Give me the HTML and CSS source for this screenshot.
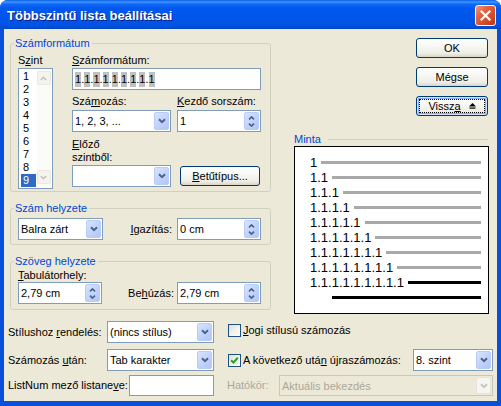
FILE: index.html
```html
<!DOCTYPE html>
<html>
<head>
<meta charset="utf-8">
<title>Többszintű lista beállításai</title>
<link rel="stylesheet" href="styles.css">
</head>
<body>
<div class="window">
  <div class="titlebar">
    <span class="title">Többszintű lista beállításai</span>
    <span class="close"><svg width="13" height="13" viewBox="0 0 13 13"><path d="M2.5 2.5 L10.5 10.5 M10.5 2.5 L2.5 10.5" stroke="#fff" stroke-width="2.2" stroke-linecap="square"/></svg></span>
  </div>
  <div class="client">
    <div class="main">
      <div class="leftcol">
        <div class="group g1">
          <div class="gtitle">Számformátum</div>
          <div class="g1body">
            <div class="szint">
              <div class="lbl">S<u>z</u>int</div>
              <div class="listbox">
                <div class="items">
                  <div class="item">1</div>
                  <div class="item">2</div>
                  <div class="item">3</div>
                  <div class="item">4</div>
                  <div class="item">5</div>
                  <div class="item">6</div>
                  <div class="item">7</div>
                  <div class="item">8</div>
                  <div class="item sel">9</div>
                </div>
                <div class="vscroll">
                  <span class="sbtn"><svg width="7" height="5" viewBox="0 0 7 5"><path d="M0.8 4 L3.5 1.3 L6.2 4" fill="none" stroke="#C3C1B7" stroke-width="1.6"/></svg></span>
                  <span class="sbtn"><svg width="7" height="5" viewBox="0 0 7 5"><path d="M0.8 1 L3.5 3.7 L6.2 1" fill="none" stroke="#C3C1B7" stroke-width="1.6"/></svg></span>
                </div>
              </div>
            </div>
            <div class="fmt">
              <div class="lbl"><u>S</u>zámformátum:</div>
              <div class="textbox fmtbox"><span class="fc">1</span>.<span class="fc">1</span>.<span class="fc">1</span>.<span class="fc">1</span>.<span class="fc">1</span>.<span class="fc">1</span>.<span class="fc">1</span>.<span class="fc">1</span>.<span class="fc">1</span></div>
              <div class="row2">
                <div class="colnum">
                  <div class="lbl">Szá<u>m</u>ozás:</div>
                  <div class="combo w99 mt2"><span class="val">1, 2, 3, ...</span><span class="dd"><svg width="8" height="6" viewBox="0 0 8 6"><path d="M1 1.2 L4 4.2 L7 1.2" fill="none" stroke="#4D6185" stroke-width="2"/></svg></span></div>
                </div>
                <div class="colstart">
                  <div class="lbl"><u>K</u>ezdő sorszám:</div>
                  <div class="combo w84 mt2"><span class="val">1</span><span class="sb"><svg width="7" height="4" viewBox="0 0 7 4"><path d="M1 3.4 L3.5 0.9 L6 3.4" fill="none" stroke="#4D6185" stroke-width="1.6"/></svg><svg width="7" height="4" viewBox="0 0 7 4"><path d="M1 0.6 L3.5 3.1 L6 0.6" fill="none" stroke="#4D6185" stroke-width="1.6"/></svg></span></div>
                </div>
              </div>
              <div class="row3">
                <div class="colnum">
                  <div class="lbl"><u>E</u>lőző<br>szintből:</div>
                  <div class="combo w99 mt1"><span class="val"></span><span class="dd"><svg width="8" height="6" viewBox="0 0 8 6"><path d="M1 1.2 L4 4.2 L7 1.2" fill="none" stroke="#4D6185" stroke-width="2"/></svg></span></div>
                </div>
                <div class="btn fontbtn"><u>B</u>etűtípus...</div>
              </div>
            </div>
          </div>
        </div>

        <div class="group g2">
          <div class="gtitle">Szám helyzete</div>
          <div class="gbody row">
            <div class="combo w85"><span class="val">Balra zárt</span><span class="dd"><svg width="8" height="6" viewBox="0 0 8 6"><path d="M1 1.2 L4 4.2 L7 1.2" fill="none" stroke="#4D6185" stroke-width="2"/></svg></span></div>
            <div class="lbl push"><u>I</u>gazítás:</div>
            <div class="combo w84 ml5"><span class="val">0 cm</span><span class="sb"><svg width="7" height="4" viewBox="0 0 7 4"><path d="M1 3.4 L3.5 0.9 L6 3.4" fill="none" stroke="#4D6185" stroke-width="1.6"/></svg><svg width="7" height="4" viewBox="0 0 7 4"><path d="M1 0.6 L3.5 3.1 L6 0.6" fill="none" stroke="#4D6185" stroke-width="1.6"/></svg></span></div>
          </div>
        </div>

        <div class="group g3">
          <div class="gtitle">Szöveg helyzete</div>
          <div class="gbody">
            <div class="lbl mt1"><u>T</u>abulátorhely:</div>
            <div class="row">
              <div class="combo w84"><span class="val">2,79 cm</span><span class="sb"><svg width="7" height="4" viewBox="0 0 7 4"><path d="M1 3.4 L3.5 0.9 L6 3.4" fill="none" stroke="#4D6185" stroke-width="1.6"/></svg><svg width="7" height="4" viewBox="0 0 7 4"><path d="M1 0.6 L3.5 3.1 L6 0.6" fill="none" stroke="#4D6185" stroke-width="1.6"/></svg></span></div>
              <div class="lbl push">Be<u>h</u>úzás:</div>
              <div class="combo w84 ml3"><span class="val">2,79 cm</span><span class="sb"><svg width="7" height="4" viewBox="0 0 7 4"><path d="M1 3.4 L3.5 0.9 L6 3.4" fill="none" stroke="#4D6185" stroke-width="1.6"/></svg><svg width="7" height="4" viewBox="0 0 7 4"><path d="M1 0.6 L3.5 3.1 L6 0.6" fill="none" stroke="#4D6185" stroke-width="1.6"/></svg></span></div>
            </div>
          </div>
        </div>
      </div>

      <div class="rightcol">
        <div class="btn dlgbtn first">OK</div>
        <div class="btn dlgbtn">Mégse</div>
        <div class="btn dlgbtn focus">Vissz<u>a</u><svg class="upicon" width="7" height="6" viewBox="0 0 7 6"><path d="M3.5 0 L7 3.5 L0 3.5 Z" fill="#000"/><rect x="0.5" y="4.5" width="6" height="1.2" fill="#000"/></svg></div>
        <div class="mintahead"><span>Minta</span><span class="hline"></span></div>
        <div class="preview">
          <div class="prow"><span>1</span><span class="bar"></span></div>
          <div class="prow"><span>1.1</span><span class="bar"></span></div>
          <div class="prow"><span>1.1.1</span><span class="bar"></span></div>
          <div class="prow"><span>1.1.1.1</span><span class="bar"></span></div>
          <div class="prow"><span>1.1.1.1.1</span><span class="bar"></span></div>
          <div class="prow"><span>1.1.1.1.1.1</span><span class="bar"></span></div>
          <div class="prow"><span>1.1.1.1.1.1.1</span><span class="bar"></span></div>
          <div class="prow"><span>1.1.1.1.1.1.1.1</span><span class="bar"></span></div>
          <div class="prow blk"><span>1.1.1.1.1.1.1.1.1</span><span class="bar"></span></div>
          <div class="prow blk last"><span class="bar"></span></div>
        </div>
      </div>
    </div>

    <div class="bottom">
      <div class="brow">
        <div class="lbl blw99">Stílushoz <u>r</u>endelés:</div>
        <div class="combo w107"><span class="val">(nincs stílus)</span><span class="dd"><svg width="8" height="6" viewBox="0 0 8 6"><path d="M1 1.2 L4 4.2 L7 1.2" fill="none" stroke="#4D6185" stroke-width="2"/></svg></span></div>
        <div class="chkwrap up2"><span class="chk"></span><span class="lbl"><u>J</u>ogi stílusú számozás</span></div>
      </div>
      <div class="brow mt6">
        <div class="lbl blw99">Számozás <u>u</u>tán:</div>
        <div class="combo w107"><span class="val">Tab karakter</span><span class="dd"><svg width="8" height="6" viewBox="0 0 8 6"><path d="M1 1.2 L4 4.2 L7 1.2" fill="none" stroke="#4D6185" stroke-width="2"/></svg></span></div>
        <div class="chkwrap"><span class="chk"><svg width="11" height="11" viewBox="0 0 11 11"><path d="M2.2 5.2 L4.4 7.6 L8.8 2.8" fill="none" stroke="#21A121" stroke-width="2"/></svg></span><span class="lbl">A következő utá<u>n</u> újraszámozás:</span></div>
        <div class="combo w80 push"><span class="val">8. szint</span><span class="dd"><svg width="8" height="6" viewBox="0 0 8 6"><path d="M1 1.2 L4 4.2 L7 1.2" fill="none" stroke="#4D6185" stroke-width="2"/></svg></span></div>
      </div>
      <div class="brow small mt4">
        <div class="lbl blw121">ListNum mező listane<u>v</u>e:</div>
        <div class="textbox w85"></div>
        <div class="lbl dis ml13">Hatókör:</div>
        <div class="combo disabled w214 push"><span class="val">Aktuális bekezdés</span><span class="dd"><svg width="8" height="6" viewBox="0 0 8 6"><path d="M1 1.2 L4 4.2 L7 1.2" fill="none" stroke="#C9C7BA" stroke-width="2"/></svg></span></div>
      </div>
    </div>
  </div>
</div>
</body>
</html>
```
FILE: styles.css
```css
body {
  margin: 0;
  background: #ffffff;
  font-family: "Liberation Sans", Arial, sans-serif;
  font-size: 11px;
  color: #000;
}
u { text-decoration: underline; text-underline-offset: 1px; }

.window {
  width: 501px;
  height: 406px;
  background: #0A4EDC;
  border-radius: 8px 8px 0 0;
  display: flex;
  flex-direction: column;
  overflow: hidden;
}

.titlebar {
  height: 29px;
  flex: none;
  box-sizing: border-box;
  padding: 2px 5px 0 7px;
  display: flex;
  align-items: center;
  background: linear-gradient(to bottom, #0A5FE8 0%, #3D95FF 7%, #1069F6 14%, #0058EE 30%, #0055E9 65%, #0052E2 88%, #0046C6 100%);
}
.title {
  flex: 1;
  color: #fff;
  font-weight: bold;
  font-size: 13px;
  text-shadow: 1px 1px 0 #0A1E80;
  white-space: nowrap;
}
.close {
  width: 21px;
  height: 21px;
  box-sizing: border-box;
  border: 1px solid #fff;
  border-radius: 3px;
  background: linear-gradient(135deg, #F0957A 0%, #E26240 35%, #CF4A26 70%, #B9391A 100%);
  display: flex;
  align-items: center;
  justify-content: center;
}

.client {
  flex: 1;
  background: #ECE9D8;
  margin: 0 4px 5px 4px;
  padding: 8px 4px 4px 4px;
}

.main { display: flex; align-items: flex-start; }
.leftcol { width: 261px; margin-left: 2px; }
.rightcol { width: 195px; margin-left: 23px; }

.group {
  border: 1px solid #D0D0BF;
  border-radius: 3px;
}
.g1 { margin-top: 6px; }
.g2, .g3 { margin-top: 16px; }
.gtitle {
  width: fit-content;
  margin: -7px 0 0 3px;
  padding: 0 2px 0 1px;
  background: #ECE9D8;
  color: #0046D5;
  line-height: 13px;
  white-space: nowrap;
}

.lbl { line-height: 13px; white-space: nowrap; }
.lbl.dis { color: #ACA899; }

.g1body { display: flex; padding: 4px 0 2px 7px; }
.szint { width: 35px; }
.fmt { width: 189px; margin-left: 19px; }

.listbox {
  margin-top: 1px;
  height: 121px;
  box-sizing: border-box;
  border: 1px solid #7F9DB9;
  background: #fff;
  padding: 1px;
  display: flex;
}
.items { width: 15px; margin-left: 1px; }
.item { height: 13px; line-height: 13px; padding-left: 2px; }
.item.sel { background: #316AC5; color: #fff; }
.vscroll {
  width: 15px;
  margin-left: 1px;
  background: #FBFBF8;
  display: flex;
  flex-direction: column;
  justify-content: space-between;
  padding: 1px 0 3px 0;
}
.sbtn {
  height: 14px;
  box-sizing: border-box;
  border: 1px solid #EAE8DF;
  border-radius: 2px;
  background: #F4F3EE;
  display: flex;
  align-items: center;
  justify-content: center;
}

.textbox {
  height: 22px;
  box-sizing: border-box;
  border: 1px solid #7F9DB9;
  background: #fff;
  display: flex;
  align-items: center;
  padding-left: 2px;
}
.fmtbox { margin-top: 1px; }
.fc { background: #C0C0C0; line-height: 15px; }

.row2 { display: flex; margin-top: 5px; }
.row3 { display: flex; align-items: flex-end; margin-top: 6px; }
.colnum { width: 99px; }
.colstart { width: 84px; margin-left: 6px; }

.combo {
  height: 22px;
  box-sizing: border-box;
  border: 1px solid #7F9DB9;
  background: #fff;
  display: flex;
  align-items: stretch;
}
.combo .val {
  flex: 1;
  padding-left: 2px;
  display: flex;
  align-items: center;
  white-space: nowrap;
  overflow: hidden;
}
.dd, .sb {
  width: 15px;
  margin: 1px;
  box-sizing: border-box;
  border: 1px solid #B9CCF8;
  border-radius: 2px;
  background: linear-gradient(135deg, #D8E4FE 0%, #C2D4FC 50%, #B1C6F6 100%);
  display: flex;
  align-items: center;
  justify-content: center;
}
.sb { flex-direction: column; gap: 3px; }
.combo.disabled { border-color: #C9C7BA; background: #ECE9D8; color: #ACA899; }
.combo.disabled .dd { border-color: #E5E3DA; background: #F6F5F0; }

.w80 { width: 80px; }
.w84 { width: 84px; }
.w85 { width: 85px; }
.w99 { width: 99px; }
.w107 { width: 107px; }
.w214 { width: 214px; }
.mt1 { margin-top: 1px; }
.mt2 { margin-top: 2px; }
.mt4 { margin-top: 4px; }
.mt6 { margin-top: 6px; }
.ml3 { margin-left: 3px; }
.ml5 { margin-left: 5px; }
.ml13 { margin-left: 13px; }
.push { margin-left: auto; }

.gbody { padding: 0 9px 0 7px; }
.g2 .gbody { display: flex; align-items: center; padding-top: 3px; padding-bottom: 4px; }
.g3 .gbody { padding-bottom: 5px; }
.row { display: flex; align-items: center; }

.btn {
  box-sizing: border-box;
  border: 1px solid #003C74;
  border-radius: 3px;
  background: linear-gradient(to bottom, #FFFFFF 0%, #F7F7F3 40%, #EEEDE6 80%, #D8D3C6 100%);
  display: flex;
  align-items: center;
  justify-content: center;
  white-space: nowrap;
}
.fontbtn { width: 80px; height: 20px; margin-left: 9px; margin-bottom: 1px; }
.dlgbtn { width: 72px; height: 20px; margin-left: auto; margin-right: 1px; margin-top: 9px; }
.dlgbtn.first { margin-top: 1px; }
.dlgbtn.focus {
  box-shadow: inset 0 0 0 1px #CEE3FF, inset 0 0 0 2px #89ADF0;
  outline: 1px dotted #000;
  outline-offset: -4px;
}
.upicon { margin-left: 8px; }

.mintahead {
  display: flex;
  align-items: center;
  margin-top: 17px;
  line-height: 13px;
  color: #0046D5;
}
.hline { flex: 1; height: 1px; background: #D0D0BF; margin-left: 7px; margin-right: 1px; }

.preview {
  height: 168px;
  box-sizing: border-box;
  border: 1px solid #000;
  background: #fff;
  padding: 8px 7px 0 15px;
  font-size: 13px;
}
.prow { height: 15px; line-height: 15px; display: flex; align-items: center; white-space: nowrap; }
.prow .bar { flex: 1; height: 3px; background: #A9A9A9; margin-left: 4px; }
.prow.blk .bar { background: #000; }
.prow.last .bar { margin-left: 22px; }

.bottom { margin-top: 7px; }
.brow { display: flex; align-items: center; height: 22px; }
.brow.small { height: 21px; }
.brow.small .textbox, .brow.small .combo { height: 21px; }
.blw99 { width: 99px; }
.blw121 { width: 121px; }
.chkwrap { display: flex; align-items: center; margin-left: 14px; }
.chkwrap.up2 { margin-bottom: 3px; }
.chk {
  width: 13px;
  height: 13px;
  box-sizing: border-box;
  border: 1px solid #1C5180;
  background: linear-gradient(135deg, #DCDCD7 0%, #F4F4F1 60%, #FFFFFF 100%);
  margin-right: 2px;
  display: flex;
  align-items: center;
  justify-content: center;
}
```
